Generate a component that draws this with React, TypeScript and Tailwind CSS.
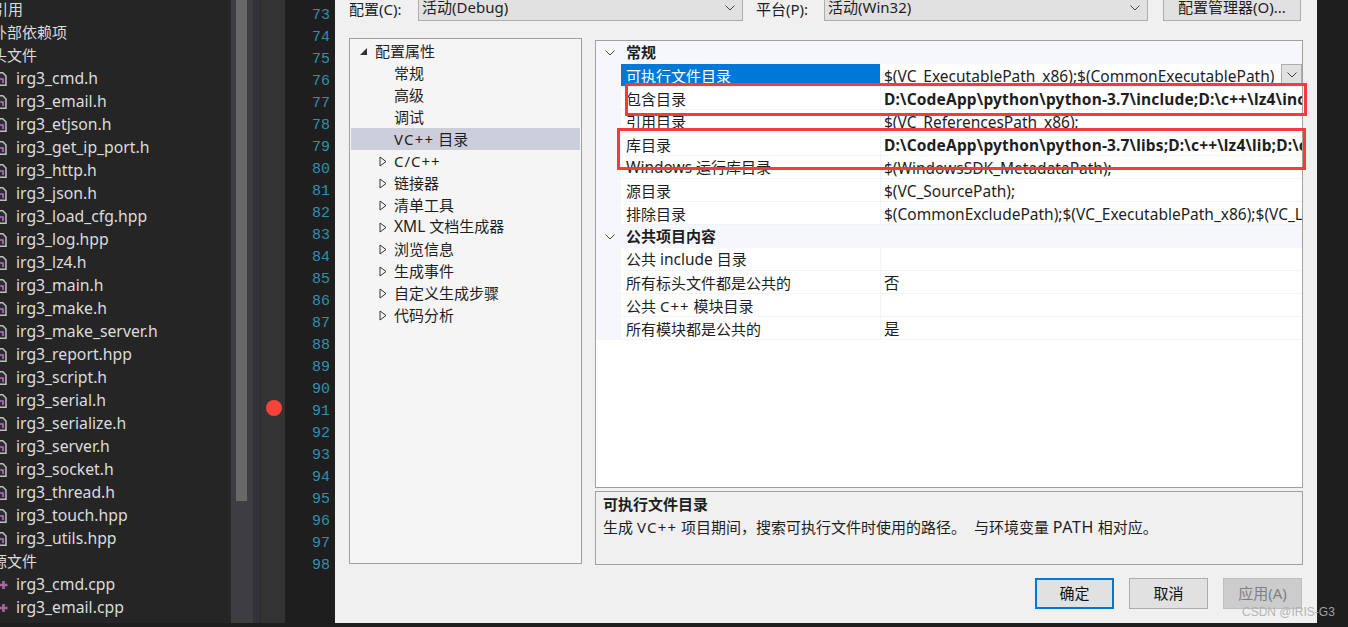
import React from "react";

const CJK = "font-['Noto_Sans','Noto_Sans_CJK_SC',sans-serif]";

const files = [
  "irg3_cmd.h","irg3_email.h","irg3_etjson.h","irg3_get_ip_port.h","irg3_http.h","irg3_json.h","irg3_load_cfg.hpp","irg3_log.hpp","irg3_lz4.h","irg3_main.h","irg3_make.h","irg3_make_server.h","irg3_report.hpp","irg3_script.h","irg3_serial.h","irg3_serialize.h","irg3_server.h","irg3_socket.h","irg3_thread.h","irg3_touch.hpp","irg3_utils.hpp",
];

function HIcon() {
  return (
    <svg width="7" height="14" viewBox="0 0 7 14" className="shrink-0">
      <path d="M-4 .8H2.8L6 4V13.2H-4Z" fill="#2d2d30" stroke="#c0c0c0" strokeWidth="1.5" />
      <path d="M0 7h3v4" fill="none" stroke="#b36fc4" strokeWidth="1.6" />
    </svg>
  );
}

function PlusIcon() {
  return (
    <svg width="8" height="10" viewBox="0 0 8 10" className="shrink-0">
      <path d="M3.5 1v8M-1 5h8.5" stroke="#a9689f" strokeWidth="2.6" fill="none" />
    </svg>
  );
}

function Row({ icon, children }: { icon?: React.ReactNode; children: React.ReactNode }) {
  return (
    <div className="h-[23px] flex items-center whitespace-nowrap text-[15.75px] text-[#dcdcdc]">
      {icon ? <span className="w-[16px] flex items-center shrink-0">{icon}</span> : null}
      {children}
    </div>
  );
}

function Sidebar() {
  return (
    <div className={`w-[231px] shrink-0 bg-[#252526] overflow-hidden -mt-[2px] ${CJK}`}>
      <Row><span className="-ml-[7px] text-[15px]">引用</span></Row>
      <Row><span className="-ml-[8px] text-[15px]">外部依赖项</span></Row>
      <Row><span className="-ml-[8px] text-[15px]">头文件</span></Row>
      {files.map((f) => (
        <Row key={f} icon={<HIcon />}>{f}</Row>
      ))}
      <Row><span className="-ml-[8px] text-[15px]">源文件</span></Row>
      <Row icon={<PlusIcon />}>irg3_cmd.cpp</Row>
      <Row icon={<PlusIcon />}>irg3_email.cpp</Row>
      <Row icon={<PlusIcon />}>irg3_etjson.cpp</Row>
    </div>
  );
}

function Scrollbar() {
  return (
    <div className="w-[22px] shrink-0 bg-[#3e3e42] pl-[5px] h-full">
      <div className="w-[11px] h-[501px] bg-[#686868]" />
    </div>
  );
}

function Gutter() {
  const nums = Array.from({ length: 26 }, (_, i) => 73 + i);
  return (
    <>
      <div className="w-[8px] shrink-0 bg-[#333337] border-r border-[#2a2a2a]" />
      <div className="relative w-[24px] shrink-0 bg-[#333333]">
        <div className="absolute left-[5px] top-[400px] w-4 h-4 rounded-full bg-[#f9423a]" />
      </div>
      <div className="w-[50px] shrink-0 bg-[#1e1e1e] pt-[5px] pr-[5px] text-right font-['Liberation_Mono',monospace] text-[15px] leading-[22px] text-[#2b91af]">
        {nums.map((n) => (
          <div key={n} className="h-[22px]">{n}</div>
        ))}
      </div>
    </>
  );
}

function Chevron() {
  return (
    <svg width="12" height="8" viewBox="0 0 12 8">
      <path d="M1.5 1.5L6 6L10.5 1.5" fill="none" stroke="#444" strokeWidth="1" />
    </svg>
  );
}

function Combo({ children, w }: { children: React.ReactNode; w: string }) {
  return (
    <div className={`${w} h-[36px] bg-[#e1e1e1] border border-[#adadad] flex items-end justify-between pl-[3px] pr-[6px] pb-[1px] leading-[24px] shrink-0`}>
      <span>{children}</span>
      <span className="mb-[7px]"><Chevron /></span>
    </div>
  );
}

function TreeItem({ label, arrow, selected }: { label: React.ReactNode; arrow?: "open" | "closed"; selected?: boolean }) {
  return (
    <div className={`h-[22px] flex items-center whitespace-nowrap ${selected ? "bg-[#cccedb]" : ""}`}>
      {arrow === "open" ? (
        <span className="w-[24px] pl-[8px] shrink-0 flex items-center">
          <svg width="9" height="9" viewBox="0 0 9 9"><path d="M8 1V8H1Z" fill="#333" /></svg>
        </span>
      ) : null}
      {arrow === "closed" ? (
        <span className="w-[43px] pl-[28px] shrink-0 flex items-center">
          <svg width="8" height="11" viewBox="0 0 8 11"><path d="M1 1L7 5.5L1 10Z" fill="none" stroke="#333" strokeWidth="1" /></svg>
        </span>
      ) : null}
      {!arrow ? <span className="w-[43px] shrink-0" /> : null}
      <span>{label}</span>
    </div>
  );
}

function Tree() {
  return (
    <div className="w-[233px] h-[526px] shrink-0 border border-[#a0a0a0] bg-[#f5f5f5] px-px pt-[1px] mt-[17px] text-[15px] text-[#1e1e1e]">
      <TreeItem label="配置属性" arrow="open" />
      <TreeItem label="常规" />
      <TreeItem label="高级" />
      <TreeItem label="调试" />
      <TreeItem label={<><span className="tracking-[1.2px]">VC++</span> 目录</>} selected />
      <TreeItem label={<span className="tracking-[1px]">C/C++</span>} arrow="closed" />
      <TreeItem label="链接器" arrow="closed" />
      <TreeItem label="清单工具" arrow="closed" />
      <TreeItem label={<><span className="text-[15.5px]">XML</span> 文档生成器</>} arrow="closed" />
      <TreeItem label="浏览信息" arrow="closed" />
      <TreeItem label="生成事件" arrow="closed" />
      <TreeItem label="自定义生成步骤" arrow="closed" />
      <TreeItem label="代码分析" arrow="closed" />
    </div>
  );
}

function PropHeader({ label }: { label: string }) {
  return (
    <div className="h-[23px] flex items-center bg-[#f5f7fb]">
      <span className="w-[30px] pl-[8px] shrink-0 flex"><Chevron /></span>
      <span className="font-bold">{label}</span>
    </div>
  );
}

function PropRow({ name, value, bold, active, extra }: { name: React.ReactNode; value?: string; bold?: boolean; active?: boolean; extra?: React.ReactNode }) {
  return (
    <div className="h-[23px] flex bg-[#f5f7fb]">
      <div className="w-[25px] shrink-0" />
      <div className={`w-[260px] shrink-0 pl-[5px] pt-[2px] flex items-center whitespace-pre border-b border-r border-[#f0f3f9] ${active ? "bg-[#0078d7] text-white" : "bg-white"}`}>
        <span>{name}</span>
      </div>
      <div className="flex-1 min-w-0 bg-white border-b border-[#f0f3f9] pl-[3px] flex items-center justify-between overflow-hidden whitespace-nowrap text-[15.5px]">
        <span className={`${bold ? "font-bold tracking-[0.17px]" : ""} pt-[3px] overflow-hidden`}>{value}</span>
        {extra}
      </div>
    </div>
  );
}

function Props() {
  return (
    <div className="h-[448px] border border-[#a0a0a0] bg-white text-[15px] text-[#1e1e1e]">
      <PropHeader label="常规" />
      <PropRow
        name="可执行文件目录"
        value="$(VC_ExecutablePath_x86);$(CommonExecutablePath)"
        active
        extra={
          <span className="w-[21px] h-[22px] shrink-0 bg-[#e1e1e1] border border-[#adadad] flex items-center justify-center">
            <Chevron />
          </span>
        }
      />
      <PropRow name="包含目录" bold value="D:\CodeApp\python\python-3.7\include;D:\c++\lz4\include;D:\c++\openssl\include" />
      <PropRow name="引用目录" value="$(VC_ReferencesPath_x86);" />
      <PropRow name="库目录" bold value="D:\CodeApp\python\python-3.7\libs;D:\c++\lz4\lib;D:\c++\openssl\lib;D:\c++\curl\lib" />
      <PropRow name={<><span className="text-[15.5px]">Windows</span> 运行库目录</>} value="$(WindowsSDK_MetadataPath);" />
      <PropRow name="源目录" value="$(VC_SourcePath);" />
      <PropRow name="排除目录" value="$(CommonExcludePath);$(VC_ExecutablePath_x86);$(VC_LibraryPath_x86);$(VC_IncludePath)" />
      <PropHeader label="公共项目内容" />
      <PropRow name={<>公共 <span className="text-[15.5px]">include</span> 目录</>} />
      <PropRow name="所有标头文件都是公共的" value="否" />
      <PropRow name={<>公共 <span className="tracking-[1px]">C++</span> 模块目录</>} />
      <PropRow name="所有模块都是公共的" value="是" />
    </div>
  );
}

function Btn({ children, kind }: { children: React.ReactNode; kind?: "primary" | "disabled" }) {
  const cls =
    kind === "primary"
      ? "border-2 border-[#0078d7] bg-[#e1e1e1] text-[#111]"
      : kind === "disabled"
      ? "border border-[#bfbfbf] bg-[#cccccc] text-[#7f7f7f]"
      : "border border-[#adadad] bg-[#e1e1e1] text-[#111]";
  return <div className={`w-[79px] h-[31px] flex items-center justify-center ${cls}`}>{children}</div>;
}

function Dialog() {
  return (
    <div className="relative w-[982px] shrink-0 bg-[#f0f0f0] pl-[14px] pr-[14px] text-[15px] text-[#1e1e1e] h-full">
      <div className="flex -mt-[15px] h-[36px] items-start">
        <span className="w-[69px] shrink-0 pt-[12px] leading-[24px] whitespace-nowrap">配置(C):</span>
        <Combo w="w-[325px]">活动(Debug)</Combo>
        <span className="w-[81px] pl-[13px] shrink-0 pt-[12px] leading-[24px] whitespace-nowrap">平台(P):</span>
        <Combo w="w-[324px]">活动(Win32)</Combo>
        <div className="ml-[15px] w-[138px] h-[36px] shrink-0 bg-[#e1e1e1] border border-[#adadad] flex items-end justify-center pb-[1px] leading-[24px] whitespace-nowrap">配置管理器(O)...</div>
      </div>
      <div className="flex">
        <Tree />
        <div className="ml-[13px] w-[708px] shrink-0 mt-[19px]">
          <Props />
          <div className="mt-[3px] h-[74px] border border-[#a0a0a0] px-[7px] pt-px leading-[23px]">
            <div className="font-bold">可执行文件目录</div>
            <div className="whitespace-pre">生成 <span className="tracking-[1.2px]">VC++</span> 项目期间，搜索可执行文件时使用的路径。  与环境变量 <span className="text-[16px] tracking-[0.6px]">PATH</span> 相对应。</div>
          </div>
        </div>
      </div>
      <div className="flex justify-end gap-[15px] pr-[1px] mt-[13px]">
        <Btn kind="primary">确定</Btn>
        <Btn>取消</Btn>
        <Btn kind="disabled">应用(A)</Btn>
      </div>
    </div>
  );
}

export default function App() {
  return (
    <div className={`relative w-[1348px] h-[627px] overflow-hidden bg-[#1e1e1e] ${CJK}`}>
      <div className="flex h-[623px]">
        <Sidebar />
        <Scrollbar />
        <Gutter />
        <Dialog />
      </div>
      <div className="absolute left-[625px] top-[83px] w-[682px] h-[33px] border-[3px] border-[#f83a3a]" />
      <div className="absolute left-[617px] top-[128px] w-[689px] h-[42px] border-[3px] border-[#f83a3a]" />
      <div className="absolute left-[1242px] top-[604px] text-[12px] leading-[16px] text-[#b0b0b0] opacity-90 font-['Liberation_Sans',sans-serif]">CSDN @IRIS-G3</div>
    </div>
  );
}
